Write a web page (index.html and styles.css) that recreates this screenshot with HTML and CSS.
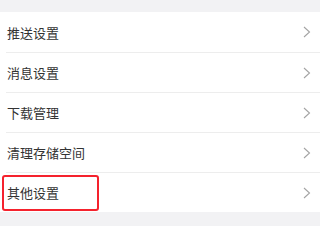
FILE: index.html
```html
<!DOCTYPE html>
<html>
<head>
  <meta charset="utf-8">
  <title>设置</title>
  <link rel="stylesheet" href="styles.css">
</head>
<body>

  <ul class="settings">
    <li class="item"><span>推送设置</span><svg class="arrow" viewBox="0 0 8 12"><path d="M1 1 L6.5 6 L1 11"/></svg></li>
    <li class="item"><span>消息设置</span><svg class="arrow" viewBox="0 0 8 12"><path d="M1 1 L6.5 6 L1 11"/></svg></li>
    <li class="item"><span>下载管理</span><svg class="arrow" viewBox="0 0 8 12"><path d="M1 1 L6.5 6 L1 11"/></svg></li>
    <li class="item"><span>清理存储空间</span><svg class="arrow" viewBox="0 0 8 12"><path d="M1 1 L6.5 6 L1 11"/></svg></li>
    <li class="item marked"><span>其他设置</span><svg class="arrow" viewBox="0 0 8 12"><path d="M1 1 L6.5 6 L1 11"/></svg>
      <div class="highlight"></div>
    </li>
  </ul>

</body>
</html>
```

FILE: styles.css
```css
body {
  margin: 0;
  padding: 12px 0 14px;
  background-color: #f2f2f4;
  font-family: "Noto Sans CJK SC", "Noto Sans", sans-serif;
}

.settings {
  list-style-type: none;
  margin: 0;
  padding: 0 0 0 6px;
  background-color: #ffffff;
}

.item {
  position: relative;
  height: 40px;
  box-sizing: border-box;
  display: flex;
  align-items: center;
  justify-content: space-between;
  padding: 0 9px 0 1px;
  border-top: 1px solid #ededed;
  font-size: 13px;
  color: #333333;
}

.item:first-child {
  border-top: none;
}

.arrow {
  width: 8px;
  height: 12px;
  fill: none;
  stroke: #a3a3a3;
  stroke-width: 1.1;
}

.highlight {
  position: absolute;
  left: -4px;
  top: 2px;
  width: 97px;
  height: 36px;
  box-sizing: border-box;
  border: 2px solid #f5222d;
  border-radius: 3px;
}
```
